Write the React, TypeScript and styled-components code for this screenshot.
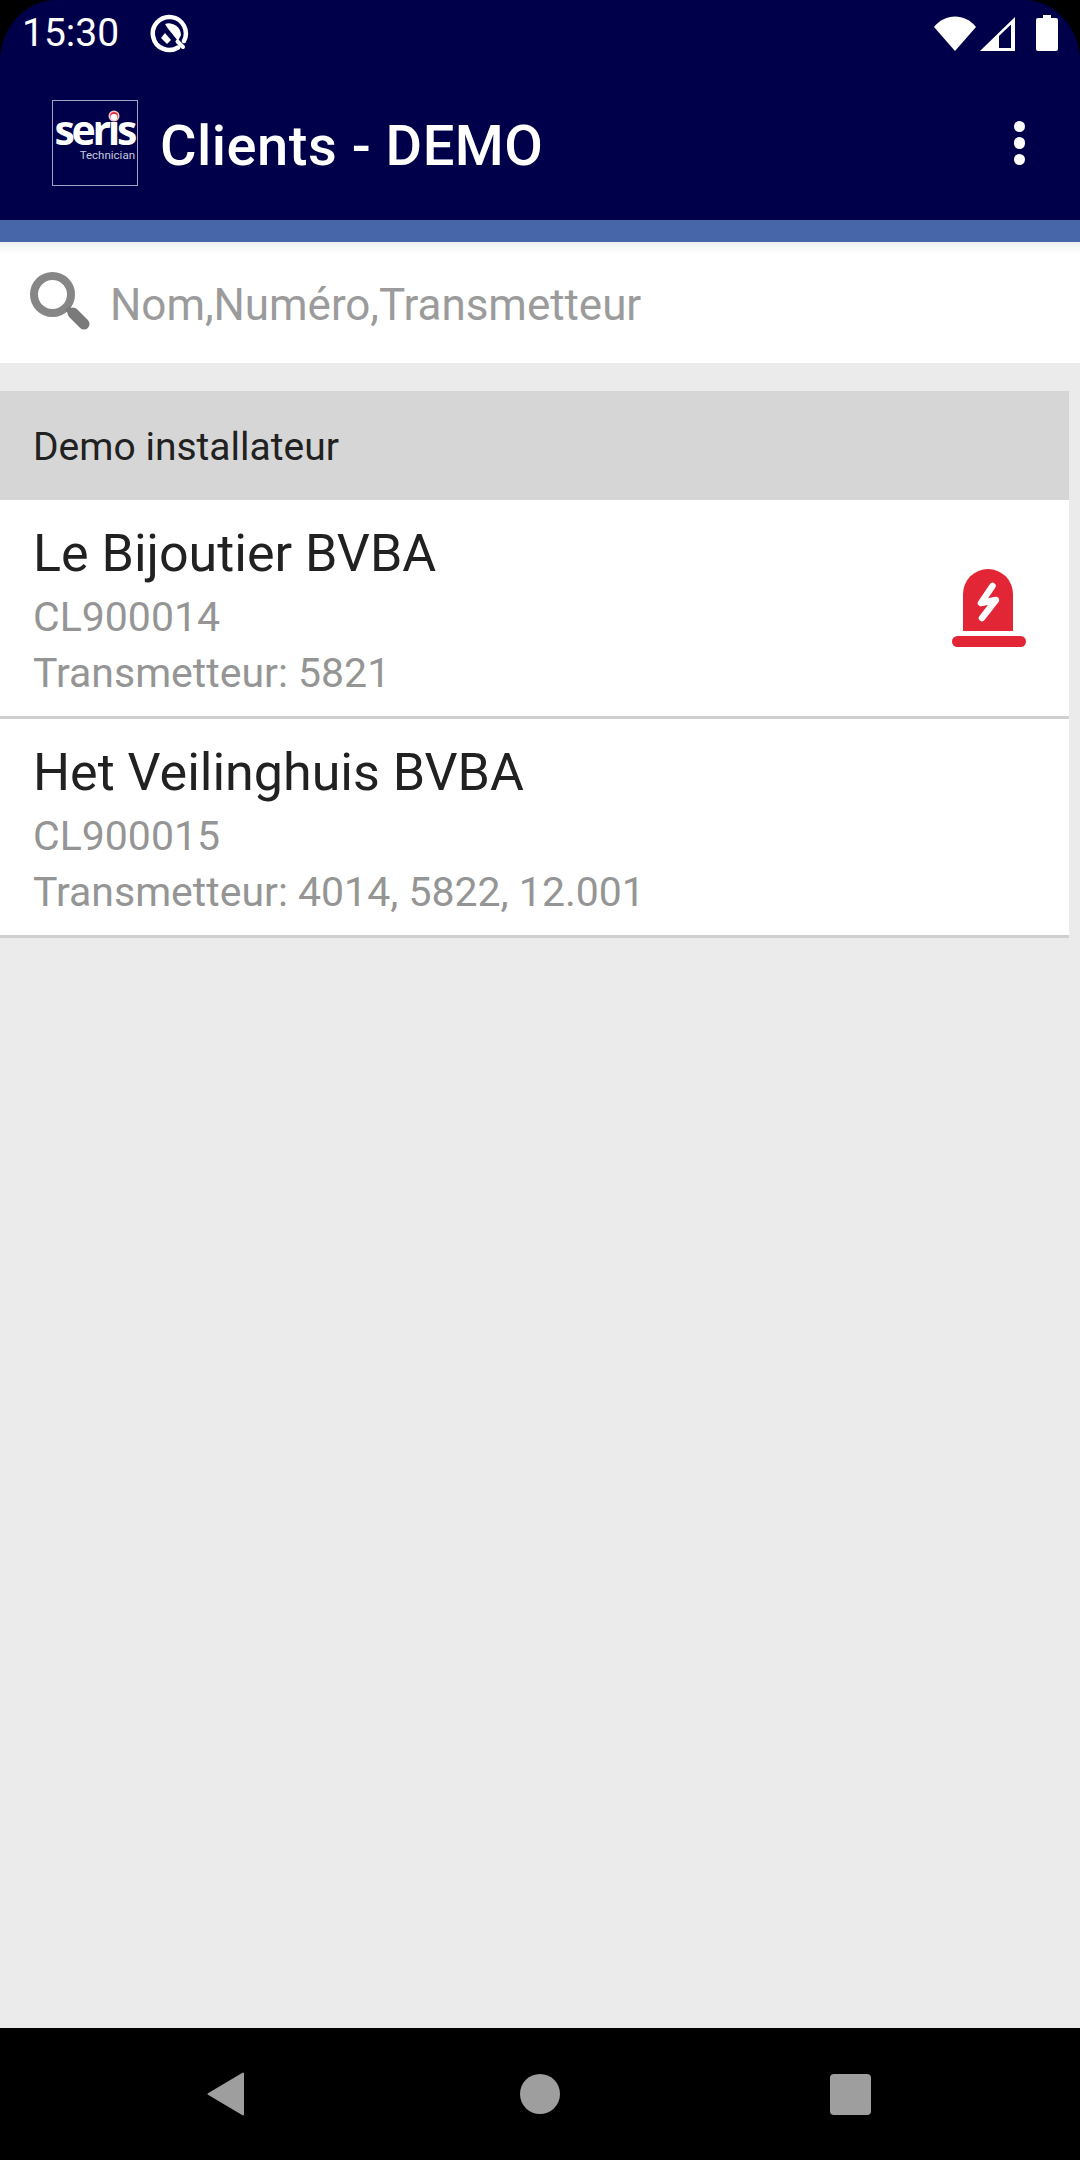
import { createGlobalStyle, styled } from "styled-components";

const GlobalStyle = createGlobalStyle`
  html, body {
    margin: 0;
    padding: 0;
    background: #000;
  }
  * {
    box-sizing: border-box;
  }
`;

const Page = styled.div`
  width: 1080px;
  height: 2160px;
  display: flex;
  flex-direction: column;
  background: #000;
  font-family: Roboto, "Liberation Sans", sans-serif;
  overflow: hidden;
`;

const Header = styled.header`
  height: 220px;
  flex: none;
  display: flex;
  flex-direction: column;
  background: #00004a;
  border-radius: 56px 56px 0 0 / 62px 62px 0 0;
`;

const StatusBar = styled.div`
  height: 66px;
  display: flex;
  align-items: center;
  padding: 0 22px 0 22px;
`;

const Clock = styled.span`
  font-size: 39px;
  color: #fff;
  margin-right: 31px;
`;

const StatusRight = styled.div`
  margin-left: auto;
  display: flex;
  align-items: center;
  gap: 4px;
`;

const Toolbar = styled.div`
  flex: 1;
  display: flex;
  align-items: center;
  padding: 0 55px 0 52px;
`;

const Logo = styled.div`
  position: relative;
  width: 86px;
  height: 86px;
  flex: none;
  border: 1px solid #9ea3c8;
  color: #fff;
`;

const LogoName = styled.span`
  position: absolute;
  right: 3px;
  top: 13px;
  font-family: "Open Sans", "Liberation Sans", sans-serif;
  font-size: 41px;
  line-height: 30px;
  font-weight: 700;
  letter-spacing: -3.3px;
`;

const LogoDot = styled.span`
  position: absolute;
  left: 57px;
  top: 11px;
  width: 8px;
  height: 8px;
  border-radius: 50%;
  background: #e8323c;
  box-shadow: 0 0 0 1.5px #f4c9cc;
`;

const LogoTag = styled.span`
  position: absolute;
  right: 2px;
  top: 48px;
  font-size: 11.5px;
  line-height: 13px;
  color: #c9cadb;
`;

const Title = styled.h1`
  margin: 5px 0 0 22px;
  font-size: 56px;
  font-weight: 500;
  letter-spacing: 0.5px;
  color: #fff;
`;

const MenuButton = styled.div`
  margin-left: auto;
  display: flex;
  flex-direction: column;
  gap: 5px;
`;

const MenuDot = styled.span`
  width: 11.5px;
  height: 11.5px;
  border-radius: 50%;
  background: #fff;
`;

const Stripe = styled.div`
  height: 22px;
  flex: none;
  background: #4765a9;
`;

const Main = styled.main`
  flex: 1;
  display: flex;
  flex-direction: column;
  background: #ebebeb;
`;

const SearchBar = styled.div`
  height: 121px;
  flex: none;
  display: flex;
  align-items: center;
  gap: 19px;
  padding: 4px 0 0 29px;
  background: linear-gradient(#eef0f0, #fff 12px);
`;

const SearchGlyph = styled.svg`
  margin-top: -9px;
  filter: blur(0.7px);
`;

const Placeholder = styled.span`
  font-size: 44px;
  letter-spacing: -0.05px;
  color: #9b9b9b;
`;

const List = styled.section`
  margin-top: 28px;
  width: 1069px;
`;

const GroupHeader = styled.div`
  height: 109px;
  display: flex;
  align-items: center;
  padding: 2px 0 0 33px;
  background: #d6d6d6;
  font-size: 39px;
  color: #212121;
`;

const Row = styled.div`
  height: 219px;
  display: flex;
  align-items: center;
  justify-content: space-between;
  padding: 0 43px 0 33px;
  background: #fff;
  border-bottom: 3px solid #cfcfcf;
`;

const RowText = styled.div`
  display: flex;
  flex-direction: column;
  margin-top: 9px;
`;

const RowTitle = styled.div`
  font-size: 52px;
  line-height: 60px;
  margin-bottom: 5px;
  color: #212121;
`;

const RowLine = styled.div`
  font-size: 41px;
  line-height: 56px;
  color: #959595;
`;

const NavBar = styled.nav`
  height: 132px;
  flex: none;
  display: flex;
  align-items: center;
  justify-content: space-between;
  padding: 0 209px 0 207px;
  background: #000;
`;

const Circle = styled.span`
  width: 40px;
  height: 40px;
  margin-left: 5px;
  border-radius: 50%;
  background: #9e9e9e;
`;

const Square = styled.span`
  width: 41px;
  height: 41px;
  border-radius: 4px;
  background: #9e9e9e;
`;

const BatteryGlyph = styled.svg`
  margin-left: 16px;
`;

const clients = [
  { name: "Le Bijoutier BVBA", code: "CL900014", senders: "5821", alarm: true },
  { name: "Het Veilinghuis BVBA", code: "CL900015", senders: "4014, 5822, 12.001", alarm: false },
];

function QIcon() {
  return (
    <svg width="39" height="39" viewBox="0 0 39 39">
      <path
        d="M28 33.5A16.5 16.5 0 1 1 34 27"
        fill="none"
        stroke="#fff"
        strokeWidth="4.5"
        strokeLinecap="round"
      />
      <path d="M15 10A12 12 0 0 1 31 21L28 27 17.5 14Z" fill="#fff" />
      <path d="M15 19 21 26 17 30 11 24Z" fill="#fff" />
      <path d="M27.5 27.5 33 33" stroke="#fff" strokeWidth="4" strokeLinecap="round" />
    </svg>
  );
}

function WifiIcon() {
  return (
    <svg width="42" height="35" viewBox="0 0 42 35">
      <path d="M0 11C11 -3 31 -3 42 11L21 35Z" fill="#fff" />
    </svg>
  );
}

function SignalIcon() {
  return (
    <svg width="36" height="35" viewBox="0 0 36 35">
      <path d="M0 35 35 1V35Z" fill="#fff" />
      <path d="M19 32V20L31 8.5V32Z" fill="#00004a" />
    </svg>
  );
}

function BatteryIcon() {
  return (
    <BatteryGlyph width="22" height="36" viewBox="0 0 22 36">
      <path d="M7 0H15V3H20A2 2 0 0 1 22 5V34A2 2 0 0 1 20 36H2A2 2 0 0 1 0 34V5A2 2 0 0 1 2 3H7Z" fill="#fff" />
    </BatteryGlyph>
  );
}

function SearchIcon() {
  return (
    <SearchGlyph width="62" height="60" viewBox="0 0 62 60">
      <circle cx="23.5" cy="24.5" r="18.5" fill="none" stroke="#868686" strokeWidth="8" />
      <path d="M38 38 44 44" stroke="#7a7a7a" strokeWidth="6" />
      <path d="M44 43 55 54" stroke="#7a7a7a" strokeWidth="11" strokeLinecap="round" />
    </SearchGlyph>
  );
}

function AlarmIcon() {
  return (
    <svg width="74" height="78" viewBox="0 0 74 78">
      <path d="M11 62V25A25 25 0 0 1 61 25V62Z" fill="#e32636" />
      <rect x="0" y="67" width="74" height="11" rx="5.5" fill="#e32636" />
      <path
        d="M40.5 17 29 34 44 31 30 49"
        fill="none"
        stroke="#fff"
        strokeWidth="6.5"
        strokeLinecap="round"
        strokeLinejoin="round"
      />
    </svg>
  );
}

function BackIcon() {
  return (
    <svg width="38" height="44" viewBox="0 0 38 44">
      <path d="M36 1.5V42.5L1.5 22Z" fill="#9e9e9e" stroke="#9e9e9e" strokeWidth="2" strokeLinejoin="round" />
    </svg>
  );
}

export default function App() {
  return (
    <Page>
      <GlobalStyle />
      <Header>
        <StatusBar>
          <Clock>15:30</Clock>
          <QIcon />
          <StatusRight>
            <WifiIcon />
            <SignalIcon />
            <BatteryIcon />
          </StatusRight>
        </StatusBar>
        <Toolbar>
          <Logo>
            <LogoDot />
            <LogoName>seris</LogoName>
            <LogoTag>Technician</LogoTag>
          </Logo>
          <Title>Clients - DEMO</Title>
          <MenuButton>
            <MenuDot />
            <MenuDot />
            <MenuDot />
          </MenuButton>
        </Toolbar>
      </Header>
      <Stripe />
      <Main>
        <SearchBar>
          <SearchIcon />
          <Placeholder>Nom,Numéro,Transmetteur</Placeholder>
        </SearchBar>
        <List>
          <GroupHeader>Demo installateur</GroupHeader>
          {clients.map((client) => (
            <Row key={client.code}>
              <RowText>
                <RowTitle>{client.name}</RowTitle>
                <RowLine>{client.code}</RowLine>
                <RowLine>Transmetteur: {client.senders}</RowLine>
              </RowText>
              {client.alarm && <AlarmIcon />}
            </Row>
          ))}
        </List>
      </Main>
      <NavBar>
        <BackIcon />
        <Circle />
        <Square />
      </NavBar>
    </Page>
  );
}
